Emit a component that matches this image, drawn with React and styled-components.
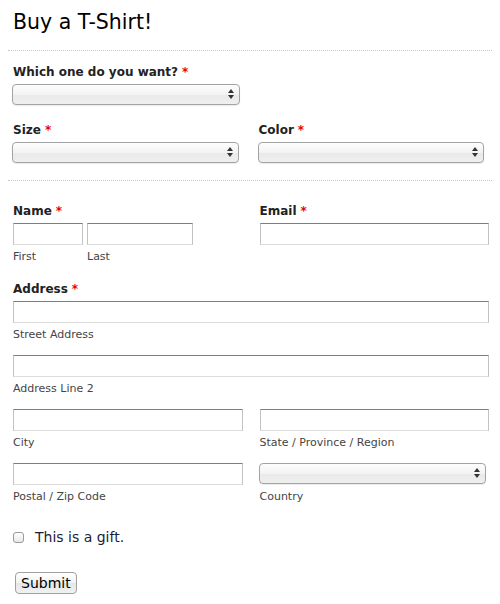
import React from 'react';
import styled, { createGlobalStyle } from 'styled-components';

const GlobalStyle = createGlobalStyle`
  body {
    margin: 0;
    background: #fff;
    font-family: 'DejaVu Sans', 'Liberation Sans', sans-serif;
    color: #222;
  }
`;

const Form = styled.form`
  margin: 0 8px;
`;

const Header = styled.div`
  padding: 8px 5px 14px;
  border-bottom: 1px dotted #c8c8c8;
`;

const Title = styled.h1`
  margin: 0;
  font-size: 20.5px;
  line-height: 28px;
  font-weight: normal;
  color: #000;
`;

const Section = styled.div`
  padding: ${(props) => props.$pad || '13px 5px 17px'};
  border-bottom: ${(props) => (props.$divider ? '1px dotted #c8c8c8' : 'none')};
  display: grid;
  grid-template-columns: 1fr 1fr;
  column-gap: 17px;
  row-gap: ${(props) => props.$rowGap || '17px'};
`;

const Field = styled.div`
  grid-column: ${(props) => (props.$full ? '1 / span 2' : 'auto')};
  display: flex;
  flex-direction: column;
`;

const Label = styled.label`
  font-size: 12px;
  font-weight: bold;
  line-height: 17px;
  color: #222;
  margin-bottom: 3px;
`;

const Req = styled.span`
  color: #e00;
  margin-left: 4px;
`;

const SelectWrap = styled.div`
  position: relative;
  width: ${(props) => props.$width || 'calc(100% - 2px)'};
  height: 21px;
  margin-left: -1px;
`;

const Select = styled.select`
  appearance: none;
  -webkit-appearance: none;
  width: 100%;
  height: 21px;
  margin: 0;
  border: 1px solid #a3a3a3;
  border-radius: 4px;
  background: linear-gradient(#fdfdfd, #f3f3f3 50%, #e9e9e9 51%, #efefef);
  box-shadow: 0 1px 1px rgba(0, 0, 0, 0.08);
`;

const Arrows = styled.svg`
  position: absolute;
  right: 6px;
  top: 5px;
  pointer-events: none;
`;

const Input = styled.input`
  box-sizing: border-box;
  height: 22px;
  width: ${(props) => props.$width || '100%'};
  margin: 0;
  padding: 2px 4px;
  border: 1px solid #c3c3c3;
  border-top-color: #7e7e7e;
  border-bottom-color: #dcdcdc;
  border-radius: 0;
  background: #fff;
`;

const Sub = styled.span`
  font-size: 11px;
  line-height: 14px;
  color: #444;
  margin-top: ${(props) => props.$top || '5px'};
`;

const SplitRow = styled.div`
  display: flex;
  gap: 4px;
`;

const SplitCol = styled.div`
  display: flex;
  flex-direction: column;
`;

const CheckRow = styled.label`
  display: flex;
  align-items: center;
  gap: 11px;
  padding: 25px 5px 0;
  font-size: 14px;
  color: #1c1c3a;
`;

const Check = styled.span`
  box-sizing: border-box;
  width: 11px;
  height: 11px;
  border: 1px solid #9a9a9a;
  border-radius: 3px;
  background: linear-gradient(#fff, #e8e8e8);
`;

const Actions = styled.div`
  padding: 27px 7px 0;
`;

const Button = styled.button`
  font-family: inherit;
  font-size: 14px;
  line-height: 17px;
  height: 22px;
  padding: 0 5px;
  color: #000;
  border: 1px solid #a0a0a0;
  border-radius: 4px;
  background: linear-gradient(#ffffff, #f2f2f2 50%, #e6e6e6 51%, #f1f1f1);
`;

const Dropdown = ({ width }) => (
  <SelectWrap $width={width}>
    <Select />
    <Arrows width="6" height="10" viewBox="0 0 6 10">
      <path d="M3 0 L6 4 L0 4 Z" fill="#333" />
      <path d="M3 10 L6 6 L0 6 Z" fill="#333" />
    </Arrows>
  </SelectWrap>
);

const App = () => (
  <>
    <GlobalStyle />
    <Form onSubmit={(e) => e.preventDefault()}>
      <Header>
        <Title>Buy a T-Shirt!</Title>
      </Header>

      <Section $divider>
        <Field $full>
          <Label>
            Which one do you want?<Req>*</Req>
          </Label>
          <Dropdown width="228px" />
        </Field>
        <Field>
          <Label>
            Size<Req>*</Req>
          </Label>
          <Dropdown />
        </Field>
        <Field>
          <Label>
            Color<Req>*</Req>
          </Label>
          <Dropdown />
        </Field>
      </Section>

      <Section $pad="22px 3px 0 5px" $rowGap="17px">
        <Field>
          <Label>
            Name<Req>*</Req>
          </Label>
          <SplitRow>
            <SplitCol>
              <Input $width="70px" />
              <Sub>First</Sub>
            </SplitCol>
            <SplitCol>
              <Input $width="106px" />
              <Sub>Last</Sub>
            </SplitCol>
          </SplitRow>
        </Field>
        <Field>
          <Label>
            Email<Req>*</Req>
          </Label>
          <Input />
        </Field>
        <Field $full>
          <Label>
            Address<Req>*</Req>
          </Label>
          <Input />
          <Sub>Street Address</Sub>
        </Field>
      </Section>

      <Section $pad="13px 3px 0 5px" $rowGap="13px">
        <Field $full>
          <Input />
          <Sub>Address Line 2</Sub>
        </Field>
        <Field>
          <Input />
          <Sub>City</Sub>
        </Field>
        <Field>
          <Input />
          <Sub>State / Province / Region</Sub>
        </Field>
        <Field>
          <Input />
          <Sub>Postal / Zip Code</Sub>
        </Field>
        <Field>
          <Dropdown />
          <Sub $top="6px">Country</Sub>
        </Field>
      </Section>

      <CheckRow>
        <Check />
        This is a gift.
      </CheckRow>

      <Actions>
        <Button type="submit">Submit</Button>
      </Actions>
    </Form>
  </>
);

export default App;
